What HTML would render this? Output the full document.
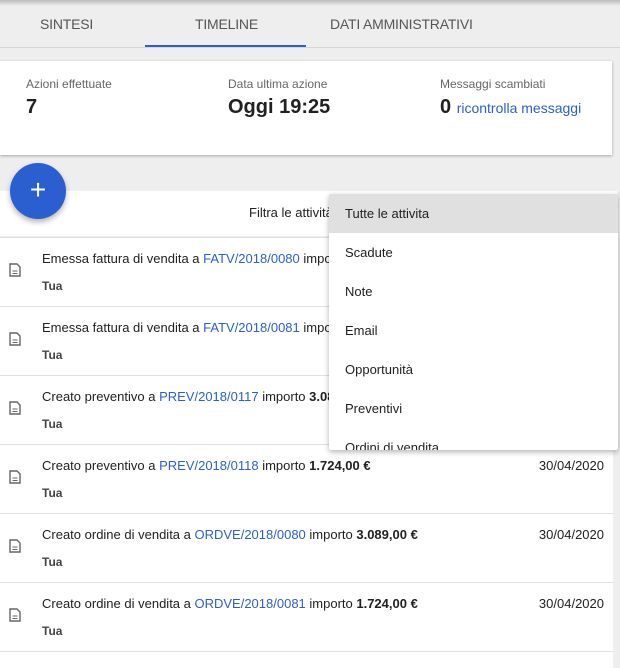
<!DOCTYPE html>
<html style="height:668px;overflow:hidden"><head><style>
*{margin:0;padding:0;box-sizing:border-box}
body{width:620px;height:668px;overflow:hidden;background:#eeeeee;font-family:"Liberation Sans",sans-serif;color:#212121;position:relative}
.topshadow{position:absolute;left:0;top:0;width:620px;height:6px;background:linear-gradient(#bbb,#eee)}
.tab{position:absolute;top:16px;font-size:14px;color:#555;letter-spacing:-0.2px}
.ul{position:absolute;left:145px;top:45px;width:161px;height:2px;background:#2b5fd0}
.tabline{position:absolute;left:0;top:47px;width:620px;height:1px;background:#d6d6d6}
.card{position:absolute;left:0;top:61px;width:612px;height:94px;background:#fff;box-shadow:0 1px 3px rgba(0,0,0,.3)}
.lbl{position:absolute;top:16px;font-size:12px;color:#666}
.val{position:absolute;top:35px;font-size:20px;font-weight:bold;color:#212121}
.link{color:#2b5fd0}
.filter{position:absolute;left:0;top:191px;width:617px;height:45px;background:#fff}
.fab{position:absolute;left:10px;top:163px;width:56px;height:56px;border-radius:50%;background:#2b5fd0;box-shadow:0 3px 6px rgba(0,0,0,.3);color:#fff;font-size:28px;text-align:center;line-height:54px}
.list{position:absolute;left:0;top:237px;width:613px;height:431px;background:#fff;overflow:hidden}
.row{position:absolute;left:0;width:613px;height:69px;border-top:1px solid #e0e0e0}
.row .t{position:absolute;left:42px;top:13px;font-size:13px}
.row .u{position:absolute;left:42px;top:41px;font-size:12px;font-weight:bold;color:#444}
.row .d{position:absolute;right:9px;top:13px;font-size:13px}
.row svg{position:absolute;left:9px;top:25px}
.menu{position:absolute;left:329px;top:194px;width:289px;height:256px;background:#fff;box-shadow:0 2px 6px rgba(0,0,0,.3);overflow:hidden;border-radius:2px}
.mi{height:39px;line-height:39px;padding-left:16px;font-size:13px}
</style></head><body>
<div class="topshadow"></div>
<div class="tab" style="left:40px">SINTESI</div>
<div class="tab" style="left:195px">TIMELINE</div>
<div class="tab" style="left:330px">DATI AMMINISTRATIVI</div>
<div class="tabline"></div><div class="ul"></div>
<div class="card">
<div class="lbl" style="left:26px">Azioni effettuate</div><div class="val" style="left:26px">7</div>
<div class="lbl" style="left:228px">Data ultima azione</div><div class="val" style="left:228px">Oggi 19:25</div>
<div class="lbl" style="left:440px">Messaggi scambiati</div><div class="val" style="left:440px">0 <span class="link" style="font-size:14px;font-weight:normal">ricontrolla messaggi</span></div>
</div>
<div class="filter"><div style="position:absolute;left:249px;top:14px;font-size:13px">Filtra le attività</div></div>
<div class="list">
<div class="row" style="top:0"><svg width="12" height="14" viewBox="0 0 12 14"><path d="M1 1h7l3 3v9H1z" fill="none" stroke="#666" stroke-width="1.4"/><path d="M3.5 8h5M3.5 10.5h5" stroke="#666"/></svg><div class="t">Emessa fattura di vendita a <span class="link">FATV/2018/0080</span> importo</div><div class="u">Tua</div></div>
<div class="row" style="top:69px"><svg width="12" height="14" viewBox="0 0 12 14"><path d="M1 1h7l3 3v9H1z" fill="none" stroke="#666" stroke-width="1.4"/><path d="M3.5 8h5M3.5 10.5h5" stroke="#666"/></svg><div class="t">Emessa fattura di vendita a <span class="link">FATV/2018/0081</span> importo</div><div class="u">Tua</div></div>
<div class="row" style="top:138px"><svg width="12" height="14" viewBox="0 0 12 14"><path d="M1 1h7l3 3v9H1z" fill="none" stroke="#666" stroke-width="1.4"/><path d="M3.5 8h5M3.5 10.5h5" stroke="#666"/></svg><div class="t">Creato preventivo a <span class="link">PREV/2018/0117</span> importo <b>3.089,00 €</b></div><div class="u">Tua</div></div>
<div class="row" style="top:207px"><svg width="12" height="14" viewBox="0 0 12 14"><path d="M1 1h7l3 3v9H1z" fill="none" stroke="#666" stroke-width="1.4"/><path d="M3.5 8h5M3.5 10.5h5" stroke="#666"/></svg><div class="t">Creato preventivo a <span class="link">PREV/2018/0118</span> importo <b>1.724,00 €</b></div><div class="u">Tua</div><div class="d">30/04/2020</div></div>
<div class="row" style="top:276px"><svg width="12" height="14" viewBox="0 0 12 14"><path d="M1 1h7l3 3v9H1z" fill="none" stroke="#666" stroke-width="1.4"/><path d="M3.5 8h5M3.5 10.5h5" stroke="#666"/></svg><div class="t">Creato ordine di vendita a <span class="link">ORDVE/2018/0080</span> importo <b>3.089,00 €</b></div><div class="u">Tua</div><div class="d">30/04/2020</div></div>
<div class="row" style="top:345px"><svg width="12" height="14" viewBox="0 0 12 14"><path d="M1 1h7l3 3v9H1z" fill="none" stroke="#666" stroke-width="1.4"/><path d="M3.5 8h5M3.5 10.5h5" stroke="#666"/></svg><div class="t">Creato ordine di vendita a <span class="link">ORDVE/2018/0081</span> importo <b>1.724,00 €</b></div><div class="u">Tua</div><div class="d">30/04/2020</div></div>
<div class="row" style="top:414px;height:17px"></div>
</div>
<div class="fab">+</div>
<div class="menu">
<div class="mi" style="background:#e0e0e0">Tutte le attivita</div>
<div class="mi">Scadute</div><div class="mi">Note</div><div class="mi">Email</div><div class="mi">Opportunità</div><div class="mi">Preventivi</div><div class="mi">Ordini di vendita</div>
</div>
</body></html>
